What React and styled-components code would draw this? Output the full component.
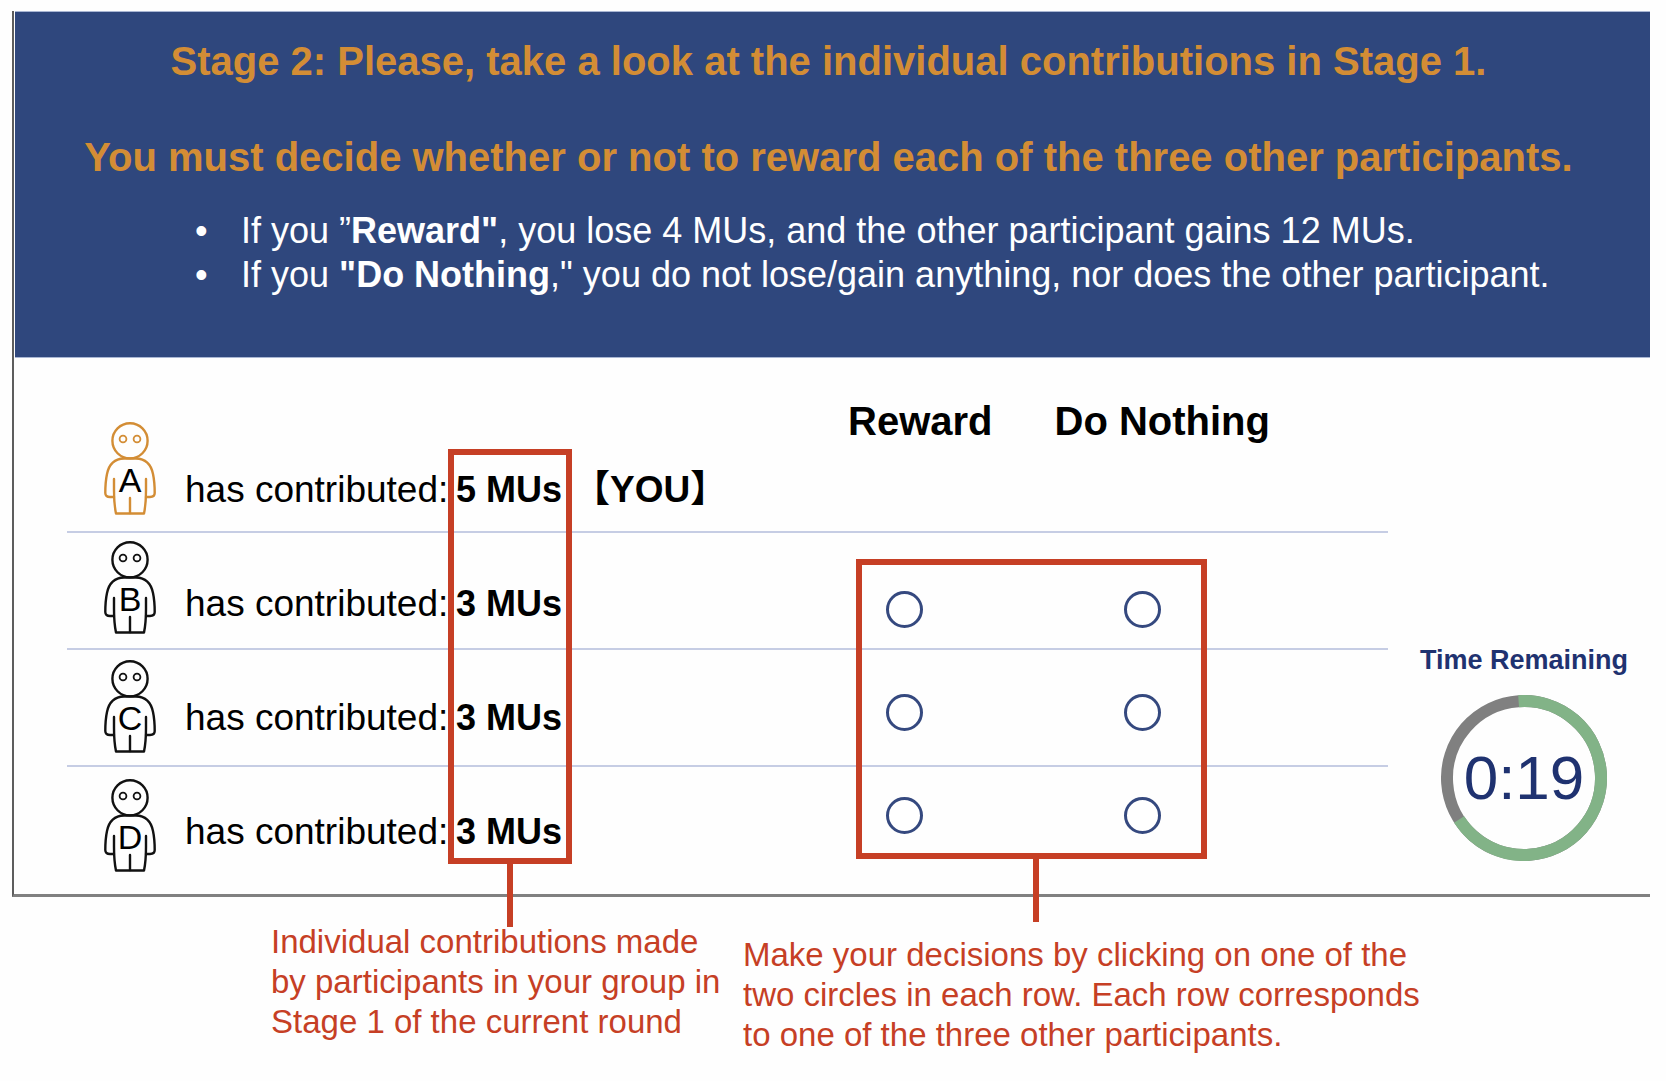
import React, { useState } from "react";
import styled, { createGlobalStyle } from "styled-components";

const RED = "#c63f25";
const ORANGE = "#d38d35";
const NAVY = "#1f3270";

const GlobalStyle = createGlobalStyle`
  * { box-sizing: border-box; }
  body {
    margin: 0;
    background: #fefefe;
    color: #000;
    font-family: "Liberation Sans", Arial, "Noto Sans CJK JP", sans-serif;
  }
`;

const Page = styled.main`
  padding: 11px 16px 24px 12px;
`;

const Frame = styled.section`
  border-left: 2px solid #5d5d5d;
  border-bottom: 3px solid #808080;
`;

const Banner = styled.header`
  margin-left: 1px;
  padding: 25px 8px 60px 0;
  border: solid #a9b6d3;
  border-width: 1px 0;
  background: #2f477d;
`;

const Heading = styled.h1`
  margin: 0 0 48px;
  color: ${ORANGE};
  font-size: 40px;
  line-height: 48px;
  font-weight: 700;
  text-align: center;

  & + & { margin-bottom: 28px; }
`;

const Rules = styled.ul`
  margin: 0;
  padding: 0 0 0 180px;
  list-style: none;
`;

const Rule = styled.li`
  display: flex;
  color: #fff;
  font-size: 36px;
  line-height: 44px;

  &::before {
    content: "•";
    flex: 0 0 46px;
  }
`;

const Body = styled.div`
  display: flex;
  padding: 0 0 22px 53px;
`;

const Board = styled.div`
  flex: 1;
  display: grid;
  grid-template-columns: 117px 264px 124px 1fr 422px 118px;
  align-items: start;
`;

const Lines = styled.div`
  grid-area: 1 / 1 / 2 / -1;
  display: grid;
  grid-template-rows: repeat(3, 117px);
  padding-top: 58px;
`;

const Line = styled.div`
  border-bottom: 2px solid #c6cde4;
`;

const Column = styled.div`
  grid-row: 1;
  grid-column: ${(p) => p.$at};
  display: flex;
  flex-direction: column;
`;

const Figures = styled(Column)`
  gap: 26px;
  padding: 64px 0 0 37px;
`;

const Texts = styled(Column)`
  gap: 66px;
  padding: 108px 0 0 1px;
  font-size: 37px;
  line-height: 48px;
  white-space: nowrap;
`;

const Callout = styled.div`
  position: relative;
  border: 6px solid ${RED};

  &::after {
    content: "";
    position: absolute;
    top: 100%;
    left: ${(p) => p.$stemAt};
    width: 6px;
    height: 69px;
    background: ${RED};
  }
`;

const Amounts = styled(Callout)`
  grid-row: 1;
  grid-column: 3;
  display: flex;
  flex-direction: column;
  gap: 66px;
  margin-top: 91px;
  padding: 11px 0 2px 2px;
  font-size: 36px;
  line-height: 48px;
  font-weight: 700;
  white-space: nowrap;
`;

const Decision = styled(Column)`
  padding-top: 39px;
`;

const Options = styled.div`
  display: flex;
  justify-content: space-between;
  font-size: 40px;
  line-height: 48px;
  font-weight: 700;
`;

const Choices = styled(Callout)`
  display: flex;
  flex-direction: column;
  gap: 66px;
  margin: 114px 63px 0 8px;
  padding: 26px 40px 19px 24px;
`;

const Choice = styled.div`
  display: flex;
  justify-content: space-between;
`;

const Radio = styled.input`
  appearance: none;
  width: 37px;
  height: 37px;
  margin: 0;
  border: 3px solid #35497f;
  border-radius: 50%;
  background: #fff;

  &:checked { background: radial-gradient(#35497f 9px, #fff 10px); }
`;

const Timer = styled.aside`
  flex: 0 0 262px;
  display: flex;
  flex-direction: column;
  align-items: center;
  gap: 19px;
  padding: 286px 0 0 10px;
  color: ${NAVY};
`;

const TimerLabel = styled.div`
  font-size: 27px;
  line-height: 32px;
  font-weight: 700;
  white-space: nowrap;
`;

const Dial = styled.div`
  display: grid;
  place-items: center;
  width: 166px;
  height: 166px;
  font-size: 62px;
  line-height: 64px;

  & > * { grid-area: 1 / 1; }
`;

const Captions = styled.div`
  display: flex;
  gap: 12px;
  padding: 25px 0 0 259px;
`;

const Caption = styled.p`
  margin: ${(p) => (p.$low ? 13 : 0)}px 0 0;
  width: ${(p) => p.$width}px;
  color: ${RED};
  font-size: 33px;
  line-height: 40px;
  white-space: nowrap;
`;

function Figure({ letter, color }) {
  return (
    <svg width="52" height="93" viewBox="0 0 52 93" role="img" aria-label={`Participant ${letter}`}>
      <g fill="none" stroke={color} strokeWidth="2.4" strokeLinejoin="round" strokeLinecap="round">
        <circle cx="26" cy="18.8" r="17.6" />
        <circle cx="19" cy="17" r="3.4" strokeWidth="1.8" />
        <circle cx="33" cy="17" r="3.4" strokeWidth="1.8" />
        <path d="M10 57 V68 Q10 82 12 91.5 H40 Q42 82 42 68 V57" />
        <path d="M10 75 H6 Q1.3 75 1.3 71 Q1.3 60 3 52 Q6 37 20 36.5 H32 Q46 37 49 52 Q50.7 60 50.7 71 Q50.7 75 46 75 H42" />
        <path d="M26 76 V91" />
      </g>
      <text x="26" y="70" textAnchor="middle" fontSize="34" fill="#000">{letter}</text>
    </svg>
  );
}

function Ring() {
  const length = 2 * Math.PI * 77;
  return (
    <svg width="166" height="166" viewBox="0 0 166 166" aria-hidden="true">
      <g fill="none" strokeWidth="12" transform="rotate(-94 83 83)">
        <circle cx="83" cy="83" r="77" stroke="#808080" />
        <circle cx="83" cy="83" r="77" stroke="#82b387" strokeDasharray={`${(length * 241) / 360} ${length}`} />
      </g>
    </svg>
  );
}

const participants = [
  { id: "A", amount: 5, you: true },
  { id: "B", amount: 3 },
  { id: "C", amount: 3 },
  { id: "D", amount: 3 },
];
const options = ["Reward", "Do Nothing"];

export default function App() {
  const [picked, setPicked] = useState({});
  return (
    <>
      <GlobalStyle />
      <Page>
        <Frame>
          <Banner>
            <Heading>Stage 2: Please, take a look at the individual contributions in Stage 1.</Heading>
            <Heading as="h2">
              You must decide whether or not to reward each of the three other participants.
            </Heading>
            <Rules>
              <Rule>
                <span>If you ”<b>Reward"</b>, you lose 4 MUs, and the other participant gains 12 MUs.</span>
              </Rule>
              <Rule>
                <span>If you <b>"Do Nothing</b>," you do not lose/gain anything, nor does the other participant.</span>
              </Rule>
            </Rules>
          </Banner>
          <Body>
            <Board>
              <Lines>
                <Line />
                <Line />
                <Line />
              </Lines>
              <Figures $at={1}>
                {participants.map((p) => (
                  <Figure key={p.id} letter={p.id} color={p.you ? ORANGE : "#111"} />
                ))}
              </Figures>
              <Texts $at={2}>
                {participants.map((p) => <span key={p.id}>has contributed:</span>)}
              </Texts>
              <Texts $at={4}>
                <strong>【YOU】</strong>
              </Texts>
              <Amounts $stemAt="calc(50% - 3px)">
                {participants.map((p) => <span key={p.id}>{p.amount} MUs</span>)}
              </Amounts>
              <Decision $at={5}>
                <Options>
                  {options.map((o) => <span key={o}>{o}</span>)}
                </Options>
                <Choices $stemAt="calc(50% + 1px)">
                  {participants.filter((p) => !p.you).map((p) => (
                    <Choice key={p.id} role="radiogroup" aria-label={`Decision for participant ${p.id}`}>
                      {options.map((o) => (
                        <Radio
                          key={o}
                          type="radio"
                          name={`decision-${p.id}`}
                          aria-label={o}
                          checked={picked[p.id] === o}
                          onChange={() => setPicked({ ...picked, [p.id]: o })}
                        />
                      ))}
                    </Choice>
                  ))}
                </Choices>
              </Decision>
            </Board>
            <Timer>
              <TimerLabel>Time Remaining</TimerLabel>
              <Dial role="timer">
                <Ring />
                <span>0:19</span>
              </Dial>
            </Timer>
          </Body>
        </Frame>
        <Captions>
          <Caption $width={460}>
            Individual contributions made<br />
            by participants in your group in<br />
            Stage 1 of the current round
          </Caption>
          <Caption $width={690} $low>
            Make your decisions by clicking on one of the<br />
            two circles in each row. Each row corresponds<br />
            to one of the three other participants.
          </Caption>
        </Captions>
      </Page>
    </>
  );
}
